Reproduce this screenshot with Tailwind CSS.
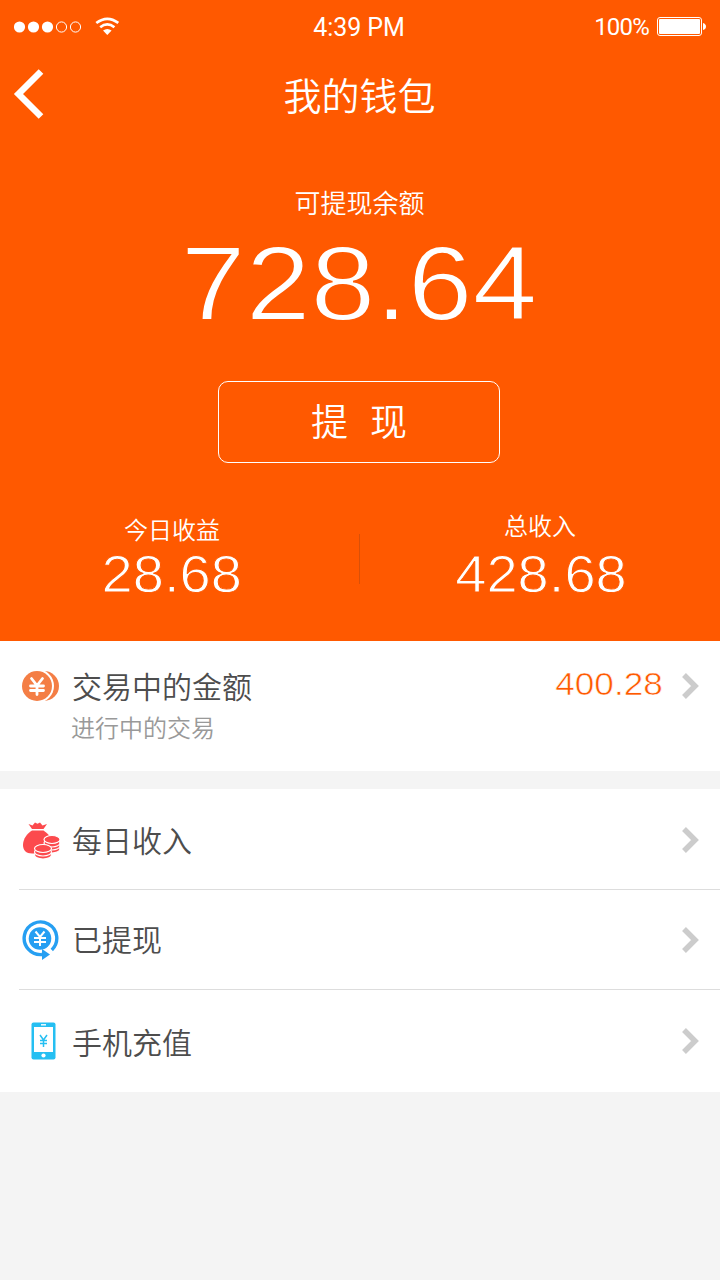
<!DOCTYPE html>
<html lang="zh-CN">
<head>
<meta charset="utf-8">
<title>我的钱包</title>
<script src="https://cdn.jsdelivr.net/npm/@tailwindcss/browser@4"></script>
</head>
<body class="w-[720px] h-[1280px] overflow-hidden bg-[#f4f4f4] font-['Noto_Sans_CJK_SC',sans-serif] font-[350] text-[#4d4d4d]">
<section class="h-[641px] bg-[#ff5900] text-white flex flex-col items-center">
  <div class="w-full h-[53px] grid grid-cols-3 items-center pl-[14px] pr-[14px] font-[Roboto,sans-serif] font-normal text-[25px] leading-[51px]">
    <div class="flex items-center">
      <svg class="w-[68px] h-[12px]" viewBox="0 0 68 12"><g fill="#fff"><circle cx="5.5" cy="6" r="5.6"/><circle cx="19.5" cy="6" r="5.6"/><circle cx="33.5" cy="6" r="5.6"/></g><g fill="none" stroke="#fff"><circle cx="47.5" cy="6" r="5.1"/><circle cx="61.5" cy="6" r="5.1"/></g></svg>
      <svg class="w-[24px] h-[19px] ml-[13px]" viewBox="0 0 24 19"><g fill="none" stroke="#fff" stroke-width="2.7"><path d="M1.3 6Q12.3-2.4 23.3 6"/><path d="M5.2 10.2Q12.3 4.600 19.4 10.200"/></g><path d="M8 13.500Q12.300 10.300 16.600 13.500L12.300 18Z" fill="#fff"/></svg>
    </div>
    <div class="text-center tracking-[-0.1px] pr-[2px] pt-px">4:39 PM</div>
    <div class="flex items-center justify-end gap-[8px]">
      <span class="tracking-[-0.8px] text-[24px] pt-px">100%</span>
      <svg class="w-[49px] h-[19px]" viewBox="0 0 49 19"><rect x=".5" y=".5" width="44" height="18" rx="2.500" fill="none" stroke="#fff"/><rect x="2" y="2" width="41" height="15" rx="1" fill="#fff"/><path d="M46 6q3 1 3 3.500T46 13Z" fill="#fff"/></svg>
    </div>
  </div>
  <div class="w-full h-[82px] grid grid-cols-[100px_1fr_101px] items-center">
    <svg class="w-[31px] h-[50px] ml-[13px]" viewBox="0 0 31 50"><path d="M28 2.500L5.500 25L28 47.500" fill="none" stroke="#fff" stroke-width="6.500"/></svg>
    <h1 class="text-[38px] leading-[82px] text-center">我的钱包</h1>
  </div>
  <p class="mt-[47px] text-[26px] leading-[40px] pr-px">可提现余额</p>
  <div class="mt-px mr-[2px] h-[120px] font-['Liberation_Sans',sans-serif] font-normal text-[106px] leading-[120px] scale-x-[1.1] [-webkit-text-stroke:1.8px_#ff5900]">728.64</div>
  <button class="mt-[38px] mr-[2px] w-[282px] h-[82px] rounded-[10px] border border-white text-[37px] flex items-center justify-center gap-[22px] pb-[2px]"><span>提</span><span>现</span></button>
  <div class="mt-[42px] w-full h-[120px] grid grid-cols-[359px_1px_360px]">
    <div class="flex flex-col items-center pr-[15px] pt-[8px]">
      <span class="text-[24px] leading-[32px]">今日收益</span>
      <span class="mt-[2px] font-['Liberation_Sans',sans-serif] text-[51px] leading-[56px] scale-x-[1.1] [-webkit-text-stroke:1px_#ff5900]">28.68</span>
    </div>
    <div class="mt-[29px] h-[50px] bg-[#d95008]"></div>
    <div class="flex flex-col items-center pt-[4px]">
      <span class="text-[24px] leading-[32px]">总收入</span>
      <span class="mt-[6px] ml-px font-['Liberation_Sans',sans-serif] text-[51px] leading-[56px] scale-x-[1.1] [-webkit-text-stroke:1px_#ff5900]">428.68</span>
    </div>
  </div>
</section>
<section class="h-[130px] bg-white flex items-start pl-[20px] pr-[21px]">
  <svg class="w-[40px] h-[32px] mt-[29px] shrink-0" viewBox="0 0 40 32"><circle cx="24" cy="16" r="15" fill="#f47e45"/><circle cx="17" cy="16" r="17" fill="#fff"/><circle cx="17" cy="16" r="15" fill="#f47e45"/><path d="M11.500 8.500l5.500 7 5.500-7M10.500 16h13M10.500 20.500h13M17 16v8.500" stroke="#fff" stroke-width="2.800" fill="none" stroke-linecap="round"/></svg>
  <div class="ml-[12px] mt-[23px] flex flex-col grow">
    <span class="text-[30px] leading-[42px]">交易中的金额</span>
    <span class="text-[24px] leading-[42px] text-[#999] -ml-px">进行中的交易</span>
  </div>
  <span class="mt-[23px] font-['Liberation_Sans',sans-serif] font-normal text-[32px] leading-[40px] text-[#ff5900] origin-right scale-x-[1.1] [-webkit-text-stroke:0.6px_#fff]">400.28</span>
  <svg class="w-[17px] h-[26px] mt-[32px] ml-[19px]" viewBox="0 0 17 26"><path d="M2 2L13 13L2 24" fill="none" stroke="#ccc" stroke-width="5.5"/></svg>
</section>
<section class="mt-[18px] h-[303px] bg-white text-[30px] leading-[42px]">
  <div class="ml-[19px] h-[101px] pr-[21px] pt-px border-b border-[#ddd] flex items-center">
    <svg class="w-[42px] h-[38px] shrink-0" viewBox="0 0 42 38"><path d="M9.500 3l4 1.500L16 1.500l2.500 1.200L21 1.500l2.500 3L28 3l-3.500 5H13Z" fill="#fc4a4d"/><path d="M13 9.500h11.500C31 14 34.500 20 34.500 25c0 5-4 7.500-11 7.500H13C7 32.500 4 29 4 24C4 18 8 12.500 13 9.500Z" fill="#fc4a4d"/><g fill="#fc4a4d" stroke="#fff" stroke-width="1.200"><ellipse cx="33" cy="28" rx="8" ry="4"/><ellipse cx="33" cy="25" rx="8" ry="4"/><ellipse cx="33" cy="22" rx="8" ry="4"/><ellipse cx="33" cy="18.500" rx="8" ry="4"/><ellipse cx="24" cy="34" rx="8.500" ry="4"/><ellipse cx="24" cy="31" rx="8.500" ry="4"/><ellipse cx="24" cy="27.500" rx="8.500" ry="4"/></g></svg>
    <span class="ml-[11px] grow pb-[2px]">每日收入</span>
    <svg class="w-[17px] h-[26px]" viewBox="0 0 17 26"><path d="M2 2L13 13L2 24" fill="none" stroke="#ccc" stroke-width="5.5"/></svg>
  </div>
  <div class="ml-[19px] h-[100px] pr-[21px] border-b border-[#ddd] flex items-center">
    <svg class="w-[42px] h-[42px] shrink-0" viewBox="0 0 42 42"><path d="M32.800 31A16.300 16.300 0 1 0 23 35.500" fill="none" stroke="#269ff2" stroke-width="3.400"/><path d="M23 30l8 5.500-8 5.500Z" fill="#269ff2"/><circle cx="21" cy="19.500" r="11.300" fill="#269ff2"/><path d="M16.500 12.500l4.500 5.500 4.500-5.500M15 19h12M15 23h12M21 18v9" fill="none" stroke="#fff" stroke-width="2"/></svg>
    <span class="ml-[11px] grow pb-[3px]">已提现</span>
    <svg class="w-[17px] h-[26px]" viewBox="0 0 17 26"><path d="M2 2L13 13L2 24" fill="none" stroke="#ccc" stroke-width="5.5"/></svg>
  </div>
  <div class="ml-[19px] h-[102px] pr-[21px] flex items-center">
    <svg class="w-[42px] h-[38px] shrink-0" viewBox="0 0 42 38"><rect x="12.500" y=".5" width="24" height="37" rx="2" fill="#25bff2"/><rect x="15" y="5" width="19" height="25" fill="#fff"/><path d="M22 2.800h5" stroke="#fff" stroke-width="1.400"/><circle cx="24.500" cy="33.500" r="2.100" fill="#fff"/><path d="M21 13l3.500 5 3.500-5M21 18.500h7M21 21.500h7M24.500 18v7" fill="none" stroke="#25bff2" stroke-width="1.500"/></svg>
    <span class="ml-[11px] grow pb-px">手机充值</span>
    <svg class="w-[17px] h-[26px]" viewBox="0 0 17 26"><path d="M2 2L13 13L2 24" fill="none" stroke="#ccc" stroke-width="5.5"/></svg>
  </div>
</section>
</body>
</html>
